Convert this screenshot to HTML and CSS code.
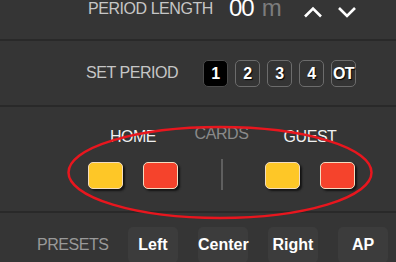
FILE: index.html
```html
<!DOCTYPE html>
<html lang="en">
  <head>
    <meta charset="utf-8" />
    <title>Scoreboard settings</title>
    <link rel="stylesheet" href="styles.css">
  </head>
  <body>
    <div id="panel">
      <div class="row length-row">
        <div class="label length-label">PERIOD LENGTH</div>
        <div class="length-value">00<span class="unit">m</span></div>
        <button class="chev chev-up" aria-label="up">
          <svg width="20" height="12" viewBox="0 0 20 12"><polyline points="2,10.5 10,2.5 18,10.5" /></svg>
        </button>
        <button class="chev chev-down" aria-label="down">
          <svg width="20" height="12" viewBox="0 0 20 12"><polyline points="2,2 10,10 18,2" /></svg>
        </button>
      </div>

      <div class="row period-row">
        <div class="label period-label">SET PERIOD</div>
        <div class="period-buttons">
          <button class="period active">1</button>
          <button class="period">2</button>
          <button class="period">3</button>
          <button class="period">4</button>
          <button class="period">OT</button>
        </div>
      </div>

      <div class="row cards-row">
        <div class="team">
          <div class="team-name">HOME</div>
          <div class="card-pair">
            <button class="card yellow"></button>
            <button class="card red"></button>
          </div>
        </div>
        <div class="cards-mid">
          <div class="cards-title">CARDS</div>
          <div class="vline"></div>
        </div>
        <div class="team">
          <div class="team-name">GUEST</div>
          <div class="card-pair">
            <button class="card yellow"></button>
            <button class="card red"></button>
          </div>
        </div>
      </div>

      <div class="row presets-row">
        <div class="label presets-label">PRESETS</div>
        <div class="preset-buttons">
          <button class="preset">Left</button>
          <button class="preset">Center</button>
          <button class="preset">Right</button>
          <button class="preset">AP</button>
        </div>
      </div>

      <!-- red marker drawn over the cards section -->
      <svg class="marker" width="396" height="262" viewBox="0 0 396 262">
        <ellipse cx="220" cy="172.5" rx="151.5" ry="45.5" />
      </svg>
    </div>
  </body>
</html>
```

FILE: styles.css
```css
html,
body {
  margin: 0px;
  padding: 0px;
  overflow: hidden;
  background-color: #353535;
}
#panel {
  position: relative;
  width: 396px;
  height: 262px;
  overflow: hidden;
  font-family: "Liberation Sans", Arial, sans-serif;
  color: #c4c4c4;
}
button {
  font-family: inherit;
  padding: 0px;
  margin: 0px;
  cursor: pointer;
}
.row {
  display: flex;
  box-sizing: border-box;
  border-bottom: 2px solid #292929;
}
.label {
  font-size: 16px;
  line-height: 18px;
  letter-spacing: -0.45px;
  color: #c6c6c6;
}

/* period length */
.length-row {
  height: 41px;
  padding-left: 88px;
  align-items: flex-start;
}
.length-label {
  margin-top: 0px;
  width: 141px;
}
.length-value {
  margin-top: -6px;
  font-size: 24px;
  line-height: 27px;
  letter-spacing: -1px;
  color: #ffffff;
  width: 54px;
}
.unit {
  color: #7c7c7c;
  margin-left: 8px;
  letter-spacing: 0px;
}
.chev {
  background: none;
  border: none;
  width: 20px;
  height: 12px;
  margin-top: 6px;
}
.chev svg {
  display: block;
}
.chev polyline {
  fill: none;
  stroke: #ffffff;
  stroke-width: 2.6;
}
.chev-up {
  margin-left: 20px;
}
.chev-down {
  margin-top: 6px;
  margin-left: 14px;
}

/* set period */
.period-row {
  height: 66px;
  padding-left: 86px;
  align-items: center;
}
.period-label {
  width: 117px;
  margin-top: 0px;
}
.period-buttons {
  display: flex;
  gap: 7px;
  margin-top: 1px;
}
.period {
  width: 25px;
  height: 27px;
  box-sizing: border-box;
  border: 1.5px solid #6c6c6c;
  border-radius: 5px;
  background-color: #343434;
  color: #ffffff;
  font-weight: bold;
  font-size: 16px;
  letter-spacing: -0.5px;
  text-shadow: 1px 1px 1px #000000;
}
.period.active {
  background-color: #000000;
  border-color: #4a4a4a;
}

/* cards */
.cards-row {
  height: 106px;
  padding-left: 88px;
  padding-top: 21px;
}
.team {
  width: 90px;
  display: flex;
  flex-direction: column;
  align-items: center;
}
.team-name {
  font-size: 16px;
  line-height: 18px;
  letter-spacing: -0.45px;
  color: #f0f0f0;
}
.card-pair {
  display: flex;
  gap: 20px;
  margin-top: 16px;
}
.card {
  width: 35px;
  height: 27px;
  border: 1px solid #f3dcc0;
  border-radius: 5px;
  box-shadow: 2px 2px 2px #141414;
}
.yellow {
  background-color: #fec727;
}
.red {
  background-color: #f5432c;
}
.cards-mid {
  width: 87px;
  display: flex;
  flex-direction: column;
  align-items: center;
}
.cards-title {
  margin-top: -3px;
  font-size: 16px;
  line-height: 18px;
  letter-spacing: -0.4px;
  color: #8a8a8a;
}
.vline {
  margin-top: 16px;
  width: 2px;
  height: 31px;
  background-color: #5f5f5f;
}

/* presets */
.presets-row {
  height: 49px;
  border-bottom: none;
  padding-left: 37px;
  padding-top: 14px;
  align-items: flex-start;
}
.presets-label {
  width: 91px;
  margin-top: 9px;
  color: #999999;
}
.preset-buttons {
  display: flex;
  gap: 20px;
}
.preset {
  width: 50px;
  height: 36px;
  border: none;
  border-radius: 5px;
  background-color: #3c3c3c;
  color: #ffffff;
  font-weight: bold;
  font-size: 16px;
}

.marker {
  position: absolute;
  left: 0px;
  top: 0px;
  pointer-events: none;
}
.marker ellipse {
  fill: none;
  stroke: #e8161e;
  stroke-width: 2.5;
}
```
